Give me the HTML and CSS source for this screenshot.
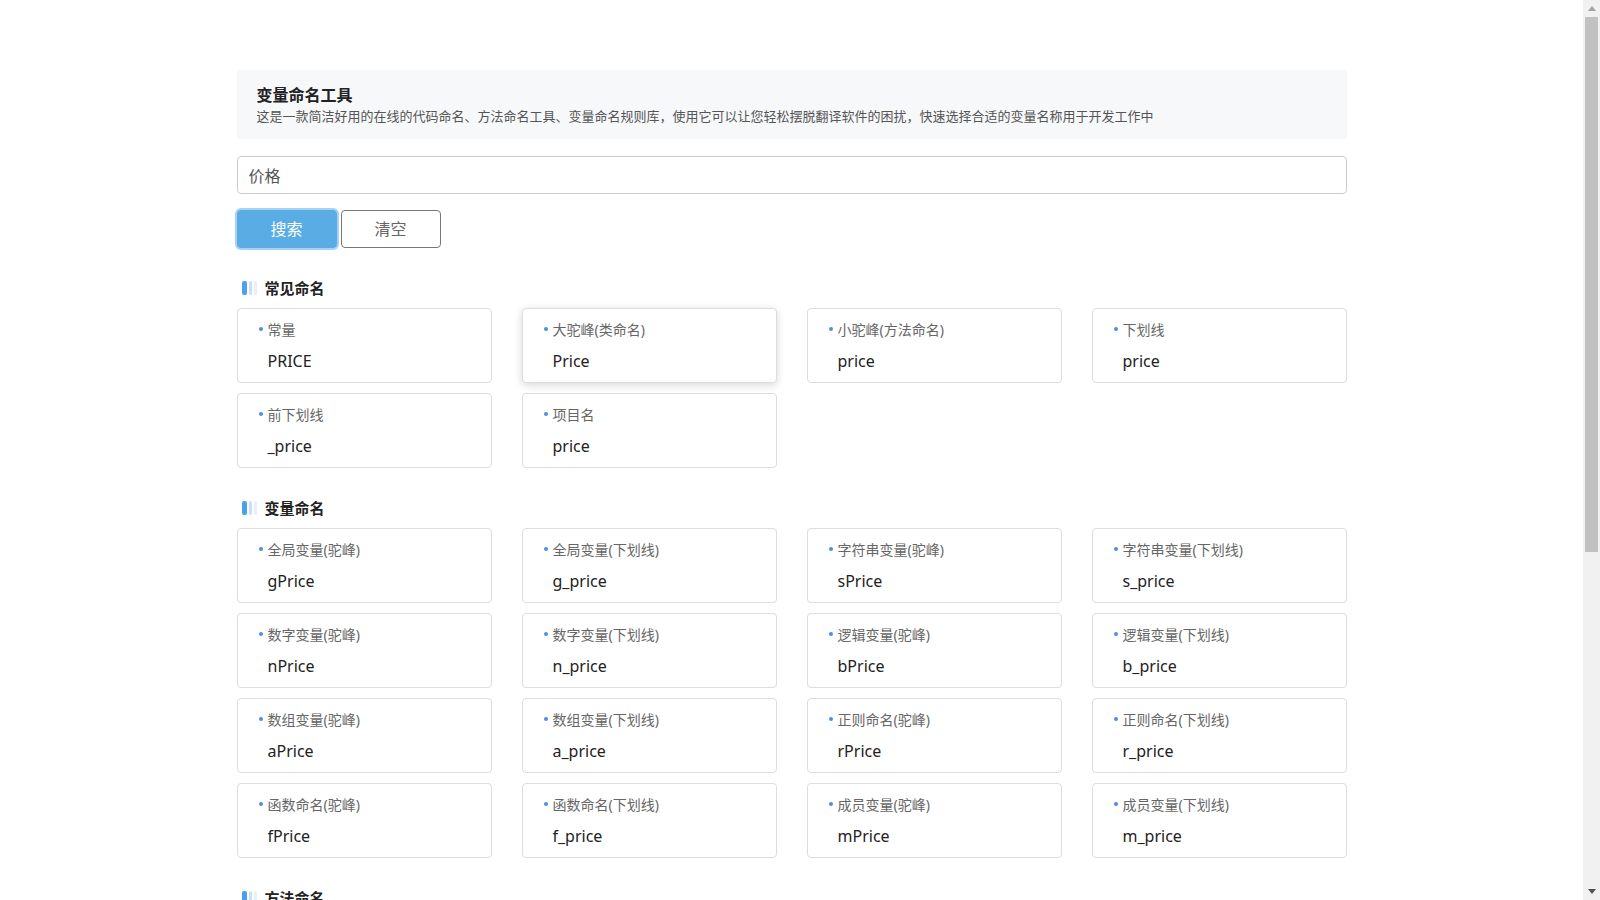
FILE: index.html
```html
<!DOCTYPE html>
<html lang="zh-CN">
<head>
<meta charset="utf-8">
<title>变量命名工具</title>
<link rel="stylesheet" href="styles.css">
</head>
<body>
<div class="container">
  <div class="intro">
    <h1 class="intro-title">变量命名工具</h1>
    <p class="intro-desc">这是一款简洁好用的在线的代码命名、方法命名工具、变量命名规则库，使用它可以让您轻松摆脱翻译软件的困扰，快速选择合适的变量名称用于开发工作中</p>
  </div>
  <input class="search-input" type="text" value="价格">
  <div class="actions">
    <button class="btn btn-primary">搜索</button>
    <button class="btn btn-default">清空</button>
  </div>

  <section class="group">
    <h2 class="group-title"><span class="bars"><i class="b1"></i><i class="b2"></i><i class="b3"></i></span>常见命名</h2>
    <div class="grid">
      <div class="card"><div class="label"><span class="dot"></span>常量</div><div class="value">PRICE</div></div>
      <div class="card hover"><div class="label"><span class="dot"></span>大驼峰(类命名)</div><div class="value">Price</div></div>
      <div class="card"><div class="label"><span class="dot"></span>小驼峰(方法命名)</div><div class="value">price</div></div>
      <div class="card"><div class="label"><span class="dot"></span>下划线</div><div class="value">price</div></div>
      <div class="card"><div class="label"><span class="dot"></span>前下划线</div><div class="value">_price</div></div>
      <div class="card"><div class="label"><span class="dot"></span>项目名</div><div class="value">price</div></div>
    </div>
  </section>

  <section class="group">
    <h2 class="group-title"><span class="bars"><i class="b1"></i><i class="b2"></i><i class="b3"></i></span>变量命名</h2>
    <div class="grid">
      <div class="card"><div class="label"><span class="dot"></span>全局变量(驼峰)</div><div class="value">gPrice</div></div>
      <div class="card"><div class="label"><span class="dot"></span>全局变量(下划线)</div><div class="value">g_price</div></div>
      <div class="card"><div class="label"><span class="dot"></span>字符串变量(驼峰)</div><div class="value">sPrice</div></div>
      <div class="card"><div class="label"><span class="dot"></span>字符串变量(下划线)</div><div class="value">s_price</div></div>
      <div class="card"><div class="label"><span class="dot"></span>数字变量(驼峰)</div><div class="value">nPrice</div></div>
      <div class="card"><div class="label"><span class="dot"></span>数字变量(下划线)</div><div class="value">n_price</div></div>
      <div class="card"><div class="label"><span class="dot"></span>逻辑变量(驼峰)</div><div class="value">bPrice</div></div>
      <div class="card"><div class="label"><span class="dot"></span>逻辑变量(下划线)</div><div class="value">b_price</div></div>
      <div class="card"><div class="label"><span class="dot"></span>数组变量(驼峰)</div><div class="value">aPrice</div></div>
      <div class="card"><div class="label"><span class="dot"></span>数组变量(下划线)</div><div class="value">a_price</div></div>
      <div class="card"><div class="label"><span class="dot"></span>正则命名(驼峰)</div><div class="value">rPrice</div></div>
      <div class="card"><div class="label"><span class="dot"></span>正则命名(下划线)</div><div class="value">r_price</div></div>
      <div class="card"><div class="label"><span class="dot"></span>函数命名(驼峰)</div><div class="value">fPrice</div></div>
      <div class="card"><div class="label"><span class="dot"></span>函数命名(下划线)</div><div class="value">f_price</div></div>
      <div class="card"><div class="label"><span class="dot"></span>成员变量(驼峰)</div><div class="value">mPrice</div></div>
      <div class="card"><div class="label"><span class="dot"></span>成员变量(下划线)</div><div class="value">m_price</div></div>
    </div>
  </section>

  <section class="group">
    <h2 class="group-title"><span class="bars"><i class="b1"></i><i class="b2"></i><i class="b3"></i></span>方法命名</h2>
    <div class="grid">
      <div class="card"><div class="label"><span class="dot"></span>获取(驼峰)</div><div class="value">getPrice</div></div>
      <div class="card"><div class="label"><span class="dot"></span>获取(下划线)</div><div class="value">get_price</div></div>
      <div class="card"><div class="label"><span class="dot"></span>设置(驼峰)</div><div class="value">setPrice</div></div>
      <div class="card"><div class="label"><span class="dot"></span>设置(下划线)</div><div class="value">set_price</div></div>
    </div>
  </section>
</div>
<div class="scrollbar" aria-hidden="true">
  <div class="sb-btn"><svg width="8" height="5" viewBox="0 0 8 5"><polygon points="4,0 8,5 0,5" fill="#a3a3a3"/></svg></div>
  <div class="sb-track"><div class="sb-thumb"></div></div>
  <div class="sb-btn"><svg width="8" height="5" viewBox="0 0 8 5"><polygon points="0,0 8,0 4,5" fill="#505050"/></svg></div>
</div>
</body>
</html>
```

FILE: styles.css
```css
* { box-sizing: border-box; }
html, body { margin: 0; padding: 0; background: #fff; }
body {
  font-family: "Noto Sans", "Noto Sans CJK SC", sans-serif;
  color: #222;
  margin-right: 17px;
}
.scrollbar {
  position: fixed;
  top: 0;
  right: 0;
  width: 17px;
  height: 100vh;
  background: #f1f1f1;
  display: flex;
  flex-direction: column;
}
.sb-btn {
  height: 17px;
  flex: none;
  display: flex;
  align-items: center;
  justify-content: center;
}
.sb-track { flex: 1; padding: 0 2px; }
.sb-thumb { height: 535px; background: #c1c1c1; }
.container {
  width: 1110px;
  margin: 0 auto;
  padding: 70px 0 44px;
}
.intro {
  background: #f7f8fa;
  border-radius: 4px;
  padding: 14px 20px 14px;
}
.intro-title {
  margin: 0 0 1px;
  font-size: 16px;
  line-height: 22px;
  font-weight: bold;
  color: #222;
}
.intro-desc {
  margin: 0;
  font-size: 13px;
  line-height: 18px;
  color: #555;
}
.search-input {
  display: block;
  width: 100%;
  height: 38px;
  margin-top: 17px;
  padding: 0 11px 1px;
  border: 1px solid #ccc;
  border-radius: 4px;
  font-family: "Noto Sans", "Noto Sans CJK SC", sans-serif;
  font-size: 16px;
  color: #555;
  outline: none;
}
.actions {
  display: flex;
  gap: 4px;
  margin-top: 16px;
}
.btn {
  width: 100px;
  height: 38px;
  border-radius: 4px;
  font-family: "Noto Sans", "Noto Sans CJK SC", sans-serif;
  font-size: 16px;
  cursor: pointer;
  padding: 0 0 2px;
}
.btn-primary {
  background: #5aade4;
  border: 1px solid #5aade4;
  color: #fff;
  box-shadow: 0 0 0 2px rgba(110, 180, 235, 0.6);
}
.btn-default {
  background: #fff;
  border: 1px solid #777;
  color: #666;
}
.group { margin-top: 30px; }
.group-title {
  display: flex;
  align-items: center;
  margin: 0 0 10px;
  padding-left: 5px;
  font-size: 15px;
  line-height: 20px;
  font-weight: bold;
  color: #222;
}
.bars {
  display: flex;
  gap: 2px;
  height: 14px;
  margin-right: 8px;
}
.bars i { display: block; height: 14px; border-radius: 2px; }
.bars .b1 { width: 5px; background: #4b9ef0; }
.bars .b2 { width: 3px; background: #c9e0fa; }
.bars .b3 { width: 3px; background: #e6f0fc; }
.grid {
  display: grid;
  grid-template-columns: repeat(4, 255px);
  column-gap: 30px;
  row-gap: 10px;
}
.card {
  height: 75px;
  border: 1px solid #ddd;
  border-radius: 4px;
  padding: 11px 16px 10px 21px;
  background: #fff;
}
.card.hover {
  box-shadow: 0 2px 8px rgba(0, 0, 0, 0.16);
}
.label {
  display: flex;
  align-items: center;
  font-size: 14px;
  line-height: 20px;
  color: #666;
}
.dot {
  width: 4px;
  height: 4px;
  border-radius: 50%;
  background: #4a90e2;
  margin-right: 5px;
  margin-top: -3px;
}
.value {
  margin-top: 10px;
  padding-left: 9px;
  font-size: 16px;
  line-height: 22px;
  color: #222;
}
```
